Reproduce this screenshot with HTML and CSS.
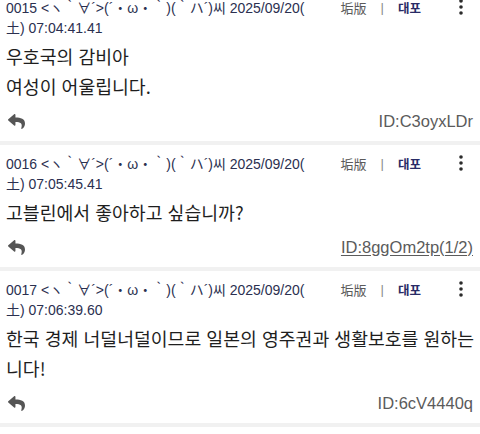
FILE: index.html
```html
<!DOCTYPE html>
<html lang="ko">
<head>
<meta charset="utf-8">
<title>thread</title>
<link rel="stylesheet" href="styles.css">
</head>
<body>
<div class="thread">
  <article class="post">
    <div class="head">
      <div class="meta">0015 &lt;ヽ｀∀´&gt;(´・ω・｀)(｀ハ´)씨 2025/09/20(<br>土) 07:04:41.41</div>
      <span class="acct">垢版</span><span class="sep">|</span><span class="daepo">대포</span>
      <span class="more"><svg width="4" height="16" viewBox="0 0 4 16"><circle cx="2" cy="2" r="1.8"/><circle cx="2" cy="8" r="1.8"/><circle cx="2" cy="14" r="1.8"/></svg></span>
    </div>
    <div class="body">우호국의 감비아<br>여성이 어울립니다.</div>
    <div class="foot">
      <svg class="reply" width="19" height="17" viewBox="0 0 512 512"><path d="M8.309 189.836L184.313 37.851C199.719 24.546 224 35.347 224 56.015v80.053c160.629 1.839 288 34.032 288 186.258 0 61.441-39.581 122.309-83.333 154.132-13.653 9.931-33.111-2.533-28.077-18.631 45.344-145.012-21.507-183.51-176.590-185.742V360c0 20.7-24.3 31.453-39.687 18.164l-176.004-152c-11.071-9.562-11.086-26.753 0-36.328z"/></svg>
      <span class="id">ID:C3oyxLDr</span>
    </div>
  </article>
  <article class="post">
    <div class="head">
      <div class="meta">0016 &lt;ヽ｀∀´&gt;(´・ω・｀)(｀ハ´)씨 2025/09/20(<br>土) 07:05:45.41</div>
      <span class="acct">垢版</span><span class="sep">|</span><span class="daepo">대포</span>
      <span class="more"><svg width="4" height="16" viewBox="0 0 4 16"><circle cx="2" cy="2" r="1.8"/><circle cx="2" cy="8" r="1.8"/><circle cx="2" cy="14" r="1.8"/></svg></span>
    </div>
    <div class="body">고블린에서 좋아하고 싶습니까?</div>
    <div class="foot">
      <svg class="reply" width="19" height="17" viewBox="0 0 512 512"><path d="M8.309 189.836L184.313 37.851C199.719 24.546 224 35.347 224 56.015v80.053c160.629 1.839 288 34.032 288 186.258 0 61.441-39.581 122.309-83.333 154.132-13.653 9.931-33.111-2.533-28.077-18.631 45.344-145.012-21.507-183.510-176.590-185.742V360c0 20.7-24.3 31.453-39.687 18.164l-176.004-152c-11.071-9.562-11.086-26.753 0-36.328z"/></svg>
      <a class="id link">ID:8ggOm2tp(1/2)</a>
    </div>
  </article>
  <article class="post">
    <div class="head">
      <div class="meta">0017 &lt;ヽ｀∀´&gt;(´・ω・｀)(｀ハ´)씨 2025/09/20(<br>土) 07:06:39.60</div>
      <span class="acct">垢版</span><span class="sep">|</span><span class="daepo">대포</span>
      <span class="more"><svg width="4" height="16" viewBox="0 0 4 16"><circle cx="2" cy="2" r="1.8"/><circle cx="2" cy="8" r="1.8"/><circle cx="2" cy="14" r="1.8"/></svg></span>
    </div>
    <div class="body">한국 경제 너덜너덜이므로 일본의 영주권과 생활보호를 원하는니다!</div>
    <div class="foot">
      <svg class="reply" width="19" height="17" viewBox="0 0 512 512"><path d="M8.309 189.836L184.313 37.851C199.719 24.546 224 35.347 224 56.015v80.053c160.629 1.839 288 34.032 288 186.258 0 61.441-39.581 122.309-83.333 154.132-13.653 9.931-33.111-2.533-28.077-18.631 45.344-145.012-21.507-183.510-176.590-185.742V360c0 20.7-24.3 31.453-39.687 18.164l-176.004-152c-11.071-9.562-11.086-26.753 0-36.328z"/></svg>
      <span class="id">ID:6cV4440q</span>
    </div>
  </article>
</div>
</body>
</html>
```

FILE: styles.css
```css
html, body {
  margin: 0;
  padding: 0;
  background: #ffffff;
  overflow: hidden;
}

.thread {
  margin-top: -11px;
}

.post {
  padding: 9px 6px 5px 6px;
  border-bottom: 4px solid #f1f1f1;
}

.head {
  display: flex;
  align-items: flex-start;
  font-family: "Liberation Sans", "Noto Sans CJK JP", sans-serif;
  font-size: 14px;
  line-height: 20px;
}

.meta {
  flex: 1;
  white-space: nowrap;
  color: #2b3050;
}

.acct,
.sep,
.daepo {
  line-height: 16px;
  margin-top: 2px;
}

.acct {
  font-family: "Noto Sans CJK JP", sans-serif;
  font-size: 13px;
  color: #5a5a5a;
}

.sep {
  margin-left: 14px;
  margin-right: 14px;
  color: #8a8a8a;
  font-size: 13px;
}

.daepo {
  font-family: "Noto Sans CJK KR", sans-serif;
  font-size: 12.5px;
  font-weight: 700;
  color: #282b66;
}

.more {
  display: flex;
  justify-content: center;
  width: 14px;
  margin-left: 33px;
  margin-right: 6px;
  padding-top: 1px;
  fill: #2b2b2b;
}

.body {
  margin-top: 3px;
  font-family: "Noto Sans CJK KR", sans-serif;
  font-size: 18.3px;
  line-height: 30px;
  color: #1e1e1e;
}

.foot {
  display: flex;
  align-items: center;
  justify-content: space-between;
  height: 30px;
  margin-top: 5px;
}

.reply {
  margin-left: 1px;
  fill: #555555;
}

.id {
  font-family: "Liberation Sans", sans-serif;
  font-size: 16.5px;
  color: #5b5b5b;
  margin-right: 1px;
}

.link {
  text-decoration: underline;
  text-underline-offset: 2px;
}
```
